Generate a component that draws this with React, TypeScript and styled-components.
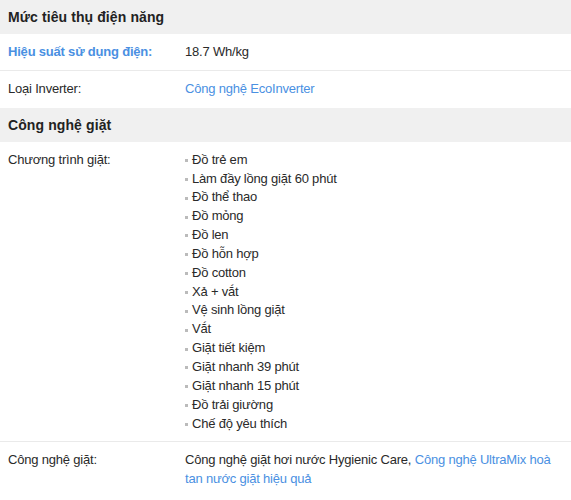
import React from "react";
import styled, { createGlobalStyle } from "styled-components";

const Global = createGlobalStyle`
  html, body { margin: 0; padding: 0; background: #fff; }
  body { font-family: "Liberation Sans", Arial, sans-serif; color: #333; }
`;

const Table = styled.div`
  width: 571px;
  display: flex;
  flex-direction: column;
`;

const Section = styled.div`
  background: #f0f0f0;
  font-size: 14px;
  font-weight: bold;
  line-height: 18px;
  padding: 8px 8px;
  height: 18px;
  color: #222;
  letter-spacing: 0.1px;
`;

const Row = styled.div<{ $border?: boolean }>`
  display: grid;
  grid-template-columns: 177px 1fr;
  padding: 9px 8px 8px 8px;
  font-size: 13px;
  line-height: 1.45;
  letter-spacing: -0.2px;
  border-bottom: 1px solid ${(p) => (p.$border ? "#eaeaea" : "transparent")};
`;

const Label = styled.div<{ $link?: boolean }>`
  color: ${(p) => (p.$link ? "#4a90e2" : "#2a2a2a")};
  font-weight: ${(p) => (p.$link ? "bold" : "normal")};
`;

const Value = styled.div`
  color: #2a2a2a;
  padding-right: 10px;
`;

const Link = styled.span`
  color: #4a90e2;
`;

const List = styled.ul`
  list-style: none;
  margin: 0;
  padding: 0;
  color: #2a2a2a;
`;

const Item = styled.li`
  display: flex;
  align-items: center;
  gap: 4px;
  &::before {
    content: "";
    width: 3px;
    height: 3px;
    margin-top: 1px;
    background: #bbb;
    flex: none;
  }
`;

const programs = [
  "Đồ trẻ em",
  "Làm đầy lồng giặt 60 phút",
  "Đồ thể thao",
  "Đồ mỏng",
  "Đồ len",
  "Đồ hỗn hợp",
  "Đồ cotton",
  "Xả + vắt",
  "Vệ sinh lồng giặt",
  "Vắt",
  "Giặt tiết kiệm",
  "Giặt nhanh 39 phút",
  "Giặt nhanh 15 phút",
  "Đồ trải giường",
  "Chế độ yêu thích",
];

export default function App() {
  return (
    <>
      <Global />
      <Table>
        <Section>Mức tiêu thụ điện năng</Section>
        <Row $border>
          <Label $link>Hiệu suất sử dụng điện:</Label>
          <Value>18.7 Wh/kg</Value>
        </Row>
        <Row>
          <Label>Loại Inverter:</Label>
          <Value>
            <Link>Công nghệ EcoInverter</Link>
          </Value>
        </Row>
        <Section>Công nghệ giặt</Section>
        <Row $border>
          <Label>Chương trình giặt:</Label>
          <List>
            {programs.map((p) => (
              <Item key={p}>{p}</Item>
            ))}
          </List>
        </Row>
        <Row>
          <Label>Công nghệ giặt:</Label>
          <Value>
            Công nghệ giặt hơi nước Hygienic Care,{" "}
            <Link>Công nghệ UltraMix hoà tan nước giặt hiệu quả</Link>
          </Value>
        </Row>
      </Table>
    </>
  );
}
